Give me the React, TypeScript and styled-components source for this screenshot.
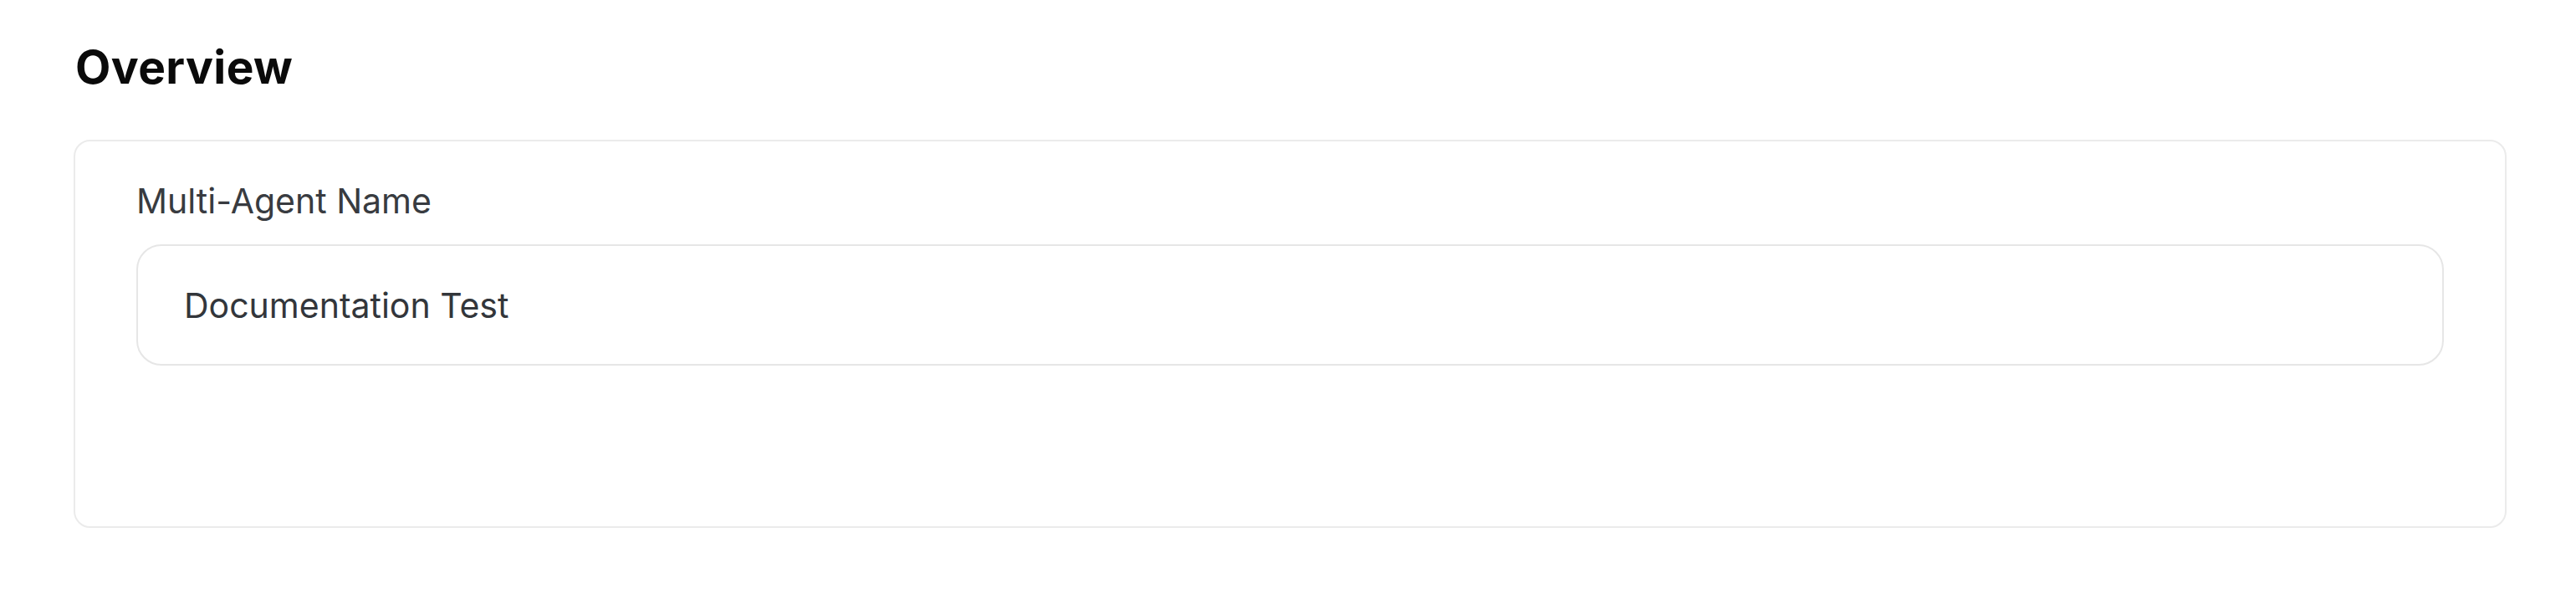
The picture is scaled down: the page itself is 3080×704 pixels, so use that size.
import React from "react";
import styled, { createGlobalStyle } from "styled-components";

const GlobalStyle = createGlobalStyle`
  html, body {
    margin: 0;
    padding: 0;
    background: #ffffff;
  }
  body {
    font-family: Inter, "Noto Sans", sans-serif;
  }
  * { box-sizing: border-box; }
`;

const Page = styled.main`
  display: flex;
  flex-direction: column;
  padding: 40px 83px 40px 88px;
  gap: 47px;
`;

const Title = styled.h2`
  margin: 0;
  padding-left: 2px;
  font-family: Inter, "Noto Sans", sans-serif;
  font-weight: 700;
  font-size: 55px;
  line-height: 80px;
  color: #0a0a0a;
  letter-spacing: 0.4px;
`;

const Card = styled.section`
  display: flex;
  flex-direction: column;
  min-height: 464px;
  padding: 43px 73px 73px 73px;
  border: 2px solid #ebebeb;
  border-radius: 20px;
  background: #fff;
`;

const Field = styled.div`
  display: flex;
  flex-direction: column;
  gap: 24px;
`;

const Label = styled.label`
  font-family: Inter, "Noto Sans", sans-serif;
  font-size: 41px;
  line-height: 56px;
  font-weight: 400;
  color: #383b40;
`;

const TextInput = styled.input`
  height: 145px;
  width: 100%;
  padding: 0 55px;
  border: 2px solid #e6e6e6;
  border-radius: 30px;
  background: #fff;
  font-family: Inter, "Noto Sans", sans-serif;
  font-size: 41px;
  color: #33363b;
  outline: none;
`;

export default function App() {
  return (
    <>
      <GlobalStyle />
      <Page>
        <Title>Overview</Title>
        <Card>
          <Field>
            <Label htmlFor="name">Multi-Agent Name</Label>
            <TextInput id="name" defaultValue="Documentation Test" readOnly />
          </Field>
        </Card>
      </Page>
    </>
  );
}
